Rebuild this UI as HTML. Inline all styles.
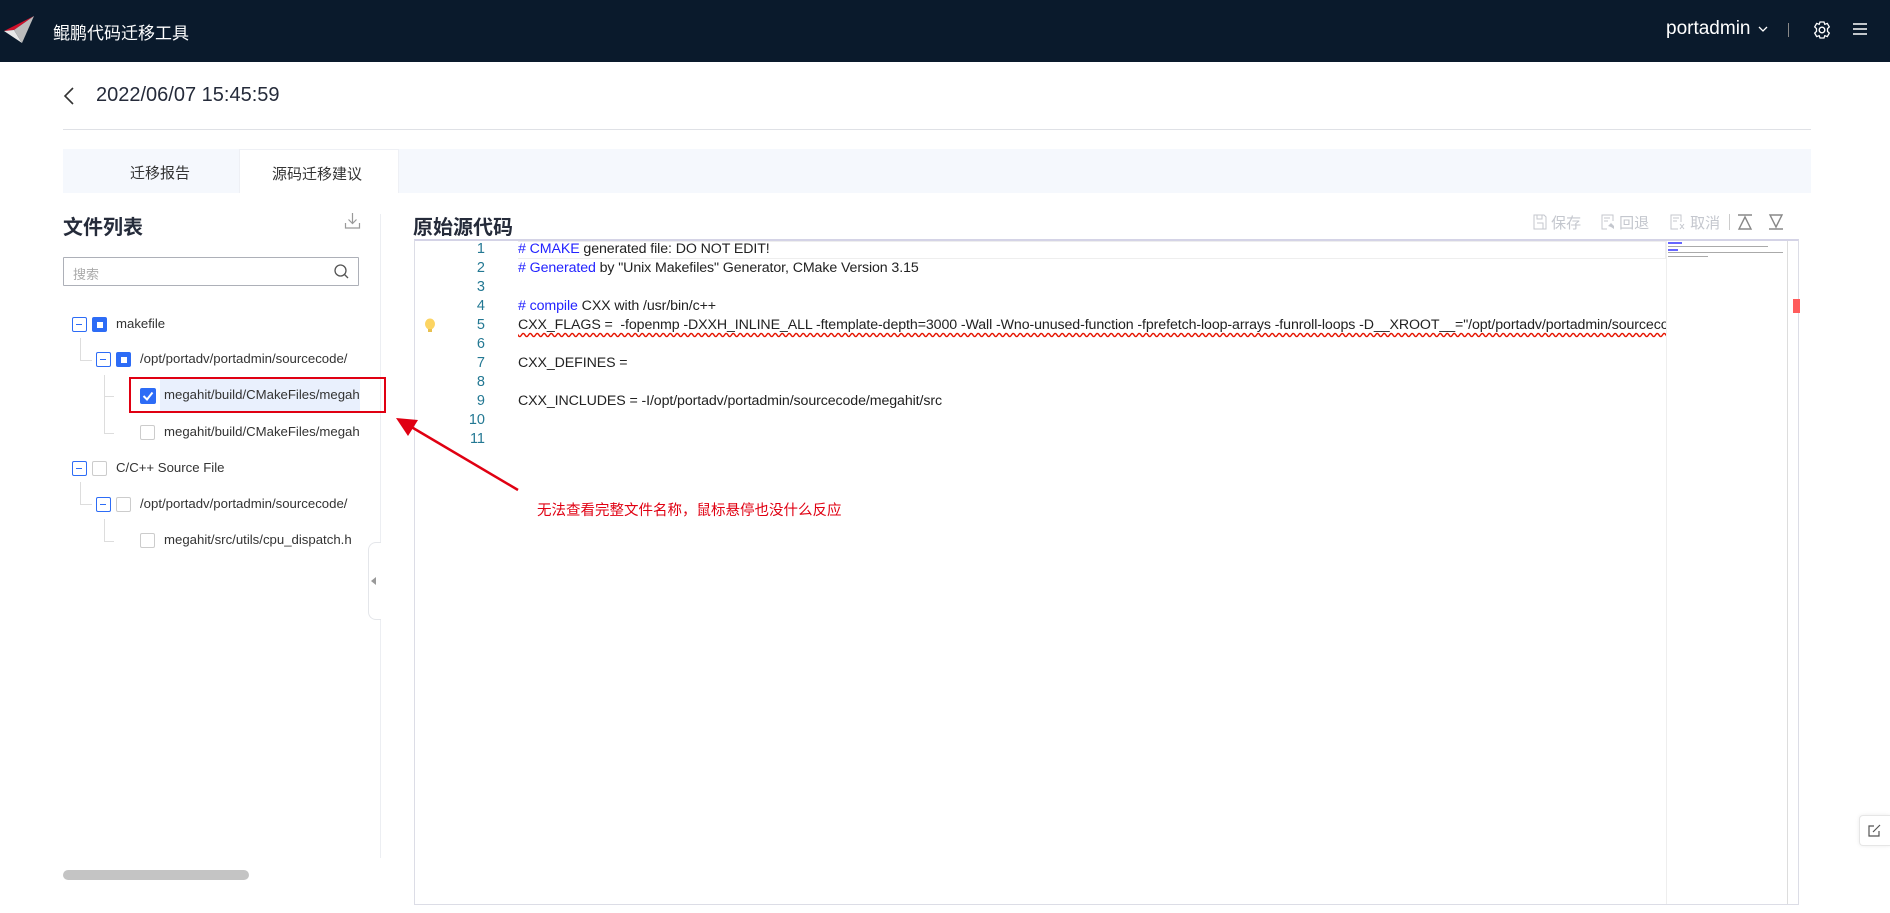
<!DOCTYPE html>
<html><head><meta charset="utf-8"><style>
*{margin:0;padding:0;box-sizing:border-box}
body{width:1890px;height:913px;overflow:hidden;background:#fff;font-family:"Liberation Sans","Noto Sans CJK SC",sans-serif;color:#222;position:relative}
.a{position:absolute;white-space:nowrap}
.hdr{left:0;top:0;width:1890px;height:62px;background:#0a1a2c}
.tree{font-size:13.2px;color:#333}
.mb{width:15px;height:15px;border:1.5px solid #2d6cf6;border-radius:2px;background:#fff}
.mb:after{content:"";position:absolute;left:3px;top:5.5px;width:6px;height:1.5px;background:#2d6cf6}
.bs{width:15px;height:15px;background:#2d6cf6;border-radius:2px}
.bs:after{content:"";position:absolute;left:4.5px;top:4.5px;width:6px;height:6px;background:#fff}
.cb{width:15px;height:15px;border:1px solid #ccc;border-radius:2px;background:#fff}
.ln{font-size:14.5px;color:#237893;width:40px;text-align:right}
.code{font-size:14.2px;color:#222;letter-spacing:-0.1px}
.cm{color:#2323ff}
</style></head><body>
<div class="a hdr"></div>
<svg class="a" style="left:0;top:12px" width="40" height="36" viewBox="0 0 40 36"><path d="M4 19 L34 4 L14 18 Z" fill="#d0102a"/><path d="M4 19 L14 18 L22 31 Z" fill="#e8e8e8"/><path d="M14 18 L34 4 L22 31 Z" fill="#bcbcbc"/></svg>
<div class="a" style="left:53px;top:19px;font-size:17px;color:#fff">鲲鹏代码迁移工具</div>
<div class="a" style="left:1666px;top:18px;font-size:19px;color:#fff">portadmin</div>
<svg class="a" style="left:1757px;top:24px" width="12" height="10"><path d="M2 3 L6 7 L10 3" stroke="#fff" stroke-width="1.3" fill="none"/></svg>
<div class="a" style="left:1788px;top:23px;width:1px;height:14px;background:#888"></div>
<svg class="a" style="left:1813px;top:20px" width="18" height="20" viewBox="0 0 18 20"><circle cx="9" cy="10" r="2.8" stroke="#fff" stroke-width="1.4" fill="none"/><path d="M7 2H11L11.8 4.3L14.3 3.4L16.3 6.9L14.5 8.6V11.4L16.3 13.1L14.3 16.6L11.8 15.7L11 18H7L6.2 15.7L3.7 16.6L1.7 13.1L3.5 11.4V8.6L1.7 6.9L3.7 3.4L6.2 4.3Z" stroke="#fff" stroke-width="1.3" fill="none"/></svg>
<svg class="a" style="left:1852px;top:21px" width="16" height="16"><path d="M1 3H15M1 8H15M1 13H15" stroke="#fff" stroke-width="1.5"/></svg>

<svg class="a" style="left:62px;top:86px" width="14" height="20"><path d="M11 2 L3 10 L11 18" stroke="#333" stroke-width="1.6" fill="none"/></svg>
<div class="a" style="left:96px;top:84px;font-size:20px;color:#252b3a">2022/06/07 15:45:59</div>
<div class="a" style="left:63px;top:129px;width:1748px;height:1px;background:#dfe1e6"></div>

<div class="a" style="left:63px;top:149px;width:1748px;height:44px;background:#f5f8fd"></div>
<div class="a" style="left:239px;top:149px;width:160px;height:44px;background:#fff;border:1px solid #eef0f5;border-bottom:none"></div>
<div class="a" style="left:130px;top:162px;font-size:15px;color:#333">迁移报告</div>
<div class="a" style="left:272px;top:163px;font-size:15px;color:#333">源码迁移建议</div>

<div class="a" style="left:63px;top:211px;font-size:20px;font-weight:bold;color:#252b3a">文件列表</div>
<svg class="a" style="left:344px;top:212px" width="17" height="18"><path d="M8.5 1V11M4.5 7.5L8.5 11.5L12.5 7.5M1.5 11V16H15.5V11" stroke="#999" stroke-width="1.2" fill="none"/></svg>
<div class="a" style="left:63px;top:257px;width:296px;height:29px;border:1px solid #adb0b8;border-radius:1px"></div>
<div class="a" style="left:73px;top:264px;font-size:13px;color:#aaa">搜索</div>
<svg class="a" style="left:333px;top:263px" width="17" height="17"><circle cx="7.5" cy="7.5" r="5.5" stroke="#555" stroke-width="1.3" fill="none"/><path d="M11.5 11.5L15 15" stroke="#555" stroke-width="1.3"/></svg>

<div class="a" style="left:380px;top:214px;width:1px;height:644px;background:#eceef2"></div>
<div class="a" style="left:368px;top:542px;width:13px;height:78px;border:1px solid #e4e6ea;border-right:none;border-radius:8px 0 0 8px;background:#fff"></div>
<svg class="a" style="left:371px;top:577px" width="6" height="8"><path d="M5 0V8L0 4Z" fill="#999"/></svg>

<div class="a" style="left:80px;top:338px;width:1px;height:22px;background:#ddd"></div>
<div class="a" style="left:80px;top:360px;width:12px;height:1px;background:#ddd"></div>
<div class="a" style="left:104px;top:375px;width:1px;height:58px;background:#ddd"></div>
<div class="a" style="left:104px;top:396px;width:10px;height:1px;background:#ddd"></div>
<div class="a" style="left:104px;top:433px;width:10px;height:1px;background:#ddd"></div>
<div class="a" style="left:80px;top:482px;width:1px;height:22px;background:#ddd"></div>
<div class="a" style="left:80px;top:504px;width:12px;height:1px;background:#ddd"></div>
<div class="a" style="left:104px;top:519px;width:1px;height:22px;background:#ddd"></div>
<div class="a" style="left:104px;top:541px;width:10px;height:1px;background:#ddd"></div>

<div class="a mb" style="left:72px;top:317px"></div><div class="a bs" style="left:92px;top:317px"></div>
<div class="a tree" style="left:116px;top:316px">makefile</div>
<div class="a mb" style="left:96px;top:352px"></div><div class="a bs" style="left:116px;top:352px"></div>
<div class="a tree" style="left:140px;top:351px">/opt/portadv/portadmin/sourcecode/</div>
<div class="a" style="left:160px;top:379px;width:200px;height:32px;background:#e9f0fd"></div>
<div class="a" style="left:140px;top:388px;width:16px;height:16px;background:#2d6cf6;border-radius:2px"></div>
<svg class="a" style="left:140px;top:388px" width="16" height="16"><path d="M3.5 8L7 11.5L12.5 4.5" stroke="#fff" stroke-width="2" fill="none"/></svg>
<div class="a tree" style="left:164px;top:387px">megahit/build/CMakeFiles/megah</div>
<div class="a" style="left:129px;top:377px;width:257px;height:36px;border:2.5px solid #e00012"></div>
<div class="a cb" style="left:140px;top:425px"></div>
<div class="a tree" style="left:164px;top:424px">megahit/build/CMakeFiles/megah</div>
<div class="a mb" style="left:72px;top:461px"></div><div class="a cb" style="left:92px;top:461px"></div>
<div class="a tree" style="left:116px;top:460px">C/C++ Source File</div>
<div class="a mb" style="left:96px;top:497px"></div><div class="a cb" style="left:116px;top:497px"></div>
<div class="a tree" style="left:140px;top:496px">/opt/portadv/portadmin/sourcecode/</div>
<div class="a cb" style="left:140px;top:533px"></div>
<div class="a tree" style="left:164px;top:532px">megahit/src/utils/cpu_dispatch.h</div>

<div class="a" style="left:63px;top:870px;width:186px;height:10px;background:#c4c4c4;border-radius:5px"></div>

<div class="a" style="left:413px;top:211px;font-size:20px;font-weight:bold;color:#252b3a">原始源代码</div>
<div class="a" style="left:1533px;top:212px;font-size:15px;color:#c4c7ce">
<svg width="14" height="16" style="vertical-align:-2px"><path d="M1 1H11L13 3V15H1Z M4 9H10V15M4 1V5H9V1" stroke="#c4c7ce" fill="none"/></svg> 保存</div>
<div class="a" style="left:1601px;top:212px;font-size:15px;color:#c4c7ce">
<svg width="14" height="16" style="vertical-align:-2px"><path d="M12 7V1H1V15H6M3 4H9M3 7H7" stroke="#c4c7ce" fill="none"/><path d="M7 12L10 9L13 12V15L10 13Z" fill="#c4c7ce"/></svg> 回退</div>
<div class="a" style="left:1670px;top:212px;font-size:15px;color:#c4c7ce">
<svg width="16" height="16" style="vertical-align:-2px"><path d="M11 8V1H1V15H8M3 4H9M3 7H7M10 10L14 15M14 10L10 15" stroke="#c4c7ce" fill="none"/></svg> 取消</div>
<div class="a" style="left:1729px;top:214px;width:1px;height:16px;background:#ccc"></div>
<svg class="a" style="left:1737px;top:214px" width="16" height="16"><path d="M1 1H15M2 15H14L8 3Z" stroke="#888" stroke-width="1.4" fill="none"/></svg>
<svg class="a" style="left:1768px;top:214px" width="16" height="16"><path d="M1 15H15M2 1H14L8 13Z" stroke="#888" stroke-width="1.4" fill="none"/></svg>

<div class="a" style="left:414px;top:239px;width:1385px;height:666px;border:1px solid #dcdde6;border-top:2px solid #d4d3e6"></div>
<div class="a" style="left:518px;top:241px;width:1148px;height:18px;border:1px solid #eee;border-left:none"></div>
<div class="a" style="left:1666px;top:241px;width:1px;height:663px;background:#eee"></div>
<div class="a" style="left:1787px;top:241px;width:1px;height:663px;background:#ddd"></div>
<div class="a" style="left:1668px;top:242px;width:14px;height:2px;background:#66f"></div>
<div class="a" style="left:1668px;top:246px;width:100px;height:1px;background:#aaa"></div>
<div class="a" style="left:1668px;top:249px;width:10px;height:2px;background:#66f"></div>
<div class="a" style="left:1668px;top:252px;width:115px;height:1px;background:#aaa"></div>
<div class="a" style="left:1668px;top:256px;width:40px;height:1px;background:#aaa"></div>
<div class="a" style="left:1793px;top:299px;width:7px;height:14px;background:#ff5c5c"></div>

<svg class="a" style="left:424px;top:318px" width="12" height="16"><ellipse cx="6" cy="6" rx="5" ry="5.5" fill="#fcd462"/><rect x="4" y="11" width="4" height="3" fill="#e8c050"/></svg>

<div class="a ln" style="left:445px;top:241px">1</div>
<div class="a ln" style="left:445px;top:260px">2</div>
<div class="a ln" style="left:445px;top:279px">3</div>
<div class="a ln" style="left:445px;top:298px">4</div>
<div class="a ln" style="left:445px;top:317px">5</div>
<div class="a ln" style="left:445px;top:336px">6</div>
<div class="a ln" style="left:445px;top:355px">7</div>
<div class="a ln" style="left:445px;top:374px">8</div>
<div class="a ln" style="left:445px;top:393px">9</div>
<div class="a ln" style="left:445px;top:412px">10</div>
<div class="a ln" style="left:445px;top:431px">11</div>
<div style="position:absolute;left:518px;top:241px;width:1148px;height:300px;overflow:hidden">
<div class="a code" style="left:0;top:0"><span class="cm"># CMAKE</span> generated file: DO NOT EDIT!</div>
<div class="a code" style="left:0;top:19px"><span class="cm"># Generated</span> by "Unix Makefiles" Generator, CMake Version 3.15</div>
<div class="a code" style="left:0;top:57px"><span class="cm"># compile</span> CXX with /usr/bin/c++</div>
<div class="a code" style="left:0;top:76px;text-decoration:underline wavy #e51400;text-underline-offset:3px">CXX_FLAGS = &nbsp;-fopenmp -DXXH_INLINE_ALL -ftemplate-depth=3000 -Wall -Wno-unused-function -fprefetch-loop-arrays -funroll-loops -D__XROOT__="/opt/portadv/portadmin/sourcecode/megahit"</div>
<div class="a code" style="left:0;top:114px">CXX_DEFINES = </div>
<div class="a code" style="left:0;top:152px">CXX_INCLUDES = -I/opt/portadv/portadmin/sourcecode/megahit/src</div>
</div>

<div class="a" style="left:537px;top:499px;font-size:14.5px;color:#e00012">无法查看完整文件名称，鼠标悬停也没什么反应</div>
<svg class="a" style="left:390px;top:410px" width="140" height="90"><path d="M128 80 L18 15" stroke="#e00012" stroke-width="2.5"/><path d="M6 8 L28 10 L18 26 Z" fill="#e00012"/></svg>

<div class="a" style="left:1859px;top:815px;width:31px;height:31px;background:#fff;border:1px solid #e6e6e6;border-right:none;border-radius:4px 0 0 4px;box-shadow:0 0 4px rgba(0,0,0,.08)"></div>
<svg class="a" style="left:1867px;top:823px" width="15" height="15"><path d="M12 8V13H2V3H7M6 9L13 2" stroke="#555" stroke-width="1.2" fill="none"/></svg>
</body></html>
